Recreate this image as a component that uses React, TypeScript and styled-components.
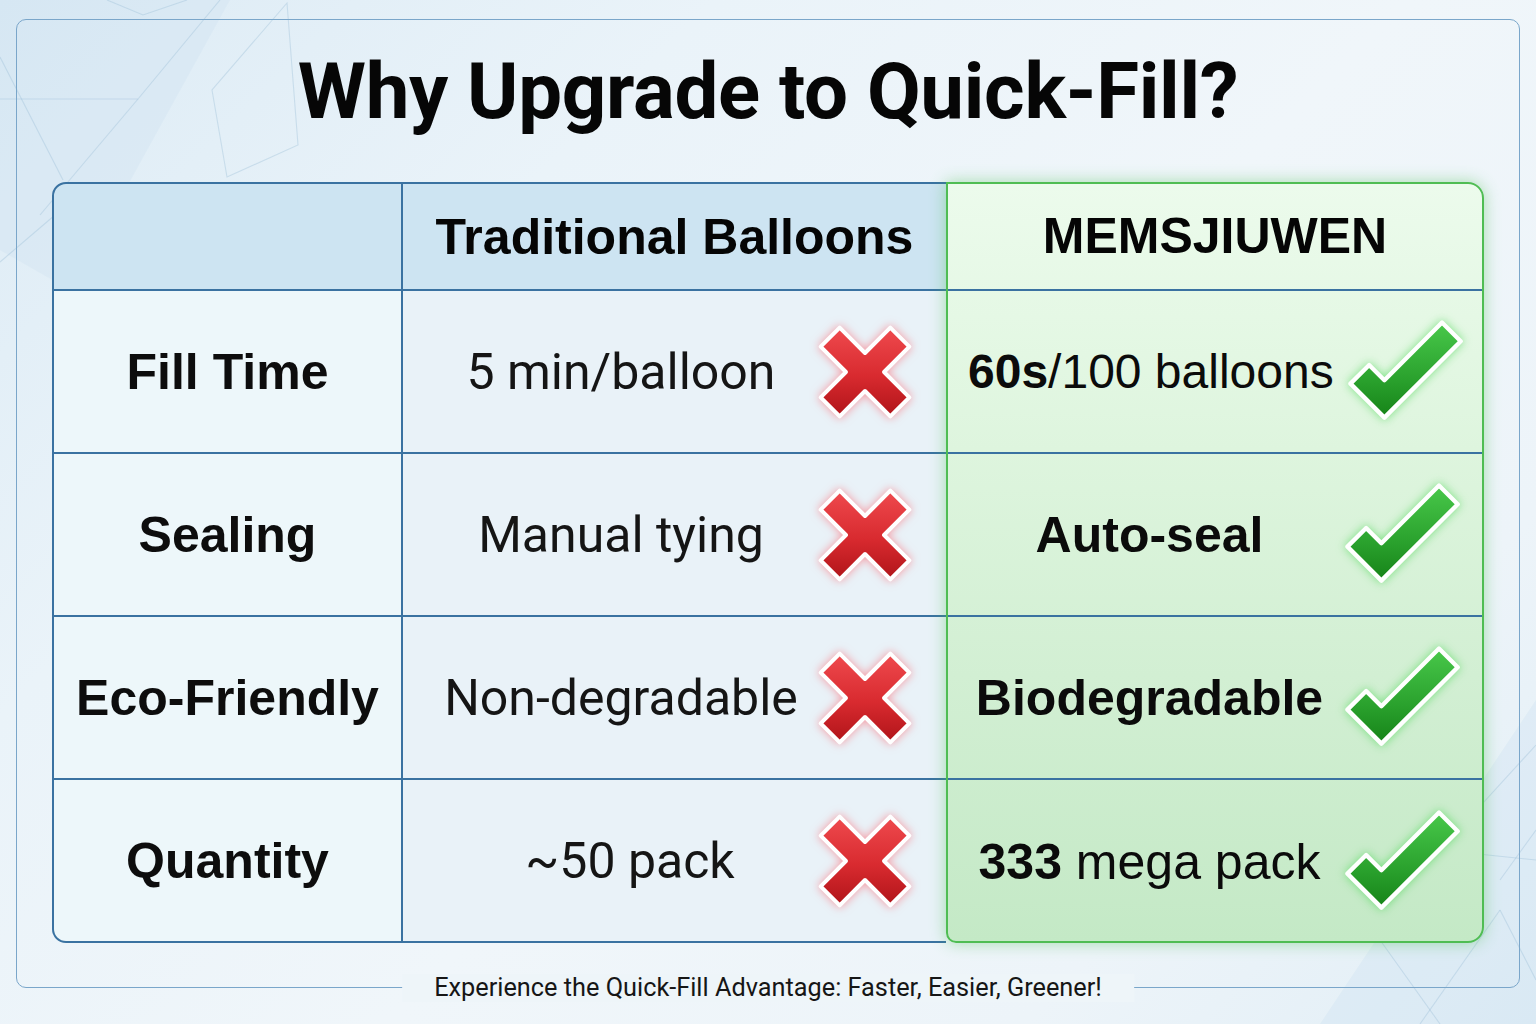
import React from "react";
import styled, { createGlobalStyle } from "styled-components";

const BLUE_LINE = "#3a72a1";
const GREEN_LINE = "#4fbd53";

const GlobalStyle = createGlobalStyle`
  html, body { margin: 0; padding: 0; }
  body {
    width: 1536px;
    height: 1024px;
    overflow: hidden;
    background: linear-gradient(135deg, #dcebf5 0%, #eaf3f9 28%, #f0f6fa 55%, #edf4f9 80%, #e1eef6 100%);
    font-family: "Liberation Sans", Arial, sans-serif;
    color: #0d0d0d;
  }
`;

const Page = styled.div`
  position: relative;
  width: 1536px;
  height: 1024px;
  box-sizing: border-box;
  padding: 19px 16px 36px;
  display: flex;
`;

const Decor = styled.svg`
  position: absolute;
  inset: 0;
  width: 1536px;
  height: 1024px;
  pointer-events: none;
`;

const Frame = styled.main`
  position: relative;
  flex: 1;
  box-sizing: border-box;
  border: 1.5px solid #7aa6ca;
  border-radius: 10px;
  display: flex;
  flex-direction: column;
  align-items: center;
  padding-top: 33px;
`;

const Title = styled.h1`
  margin: 0;
  font-family: Roboto, "Liberation Sans", sans-serif;
  font-weight: 700;
  font-size: 78px;
  line-height: 78px;
  letter-spacing: -0.3px;
  color: #060606;
`;

const Table = styled.section`
  margin-top: 51px;
  display: grid;
  grid-template-columns: 351px 543px 538px;
  grid-template-rows: 109px repeat(4, 163px);
`;

const GreenPanel = styled.div`
  grid-column: 3;
  grid-row: 1 / 6;
  z-index: 1;
  box-sizing: border-box;
  border: 2px solid ${GREEN_LINE};
  border-radius: 0 16px 16px 10px;
  background: linear-gradient(180deg, #ecfbec 0%, #def5de 35%, #d2efd3 65%, #c4e9c6 100%);
  box-shadow: 0 0 16px rgba(76, 190, 82, 0.45);
`;

type CellProps = { $row: number; $last?: boolean };

const Cell = styled.div<CellProps>`
  grid-row: ${(p) => p.$row};
  box-sizing: border-box;
  display: flex;
  align-items: center;
  justify-content: center;
  border-bottom: 2px solid ${BLUE_LINE};
  ${(p) => (p.$row === 1 ? `border-top: 2px solid ${BLUE_LINE};` : "")}
`;

const LabelCell = styled(Cell)`
  grid-column: 1;
  border-left: 2px solid ${BLUE_LINE};
  border-right: 2px solid ${BLUE_LINE};
  background: ${(p) => (p.$row === 1 ? "#cde4f2" : "#edf7fa")};
  ${(p) => (p.$row === 1 ? "border-top-left-radius: 14px;" : "")}
  ${(p) => (p.$last ? "border-bottom-left-radius: 14px;" : "")}
  font-weight: 700;
  font-size: 50px;
`;

const TradCell = styled(Cell)`
  grid-column: 2;
  background: ${(p) => (p.$row === 1 ? "#cde4f2" : "#e9f2f8")};
  justify-content: ${(p) => (p.$row === 1 ? "center" : "flex-start")};
`;

const GreenCell = styled(Cell)`
  grid-column: 3;
  z-index: 2;
  margin: 0 2px;
  border-top: none;
  ${(p) => (p.$last ? "border-bottom: none;" : "")}
  background: transparent;
  justify-content: ${(p) => (p.$row === 1 ? "center" : "flex-start")};
`;

const HeadText = styled.span`
  font-weight: 700;
  font-size: 50px;
  color: #050505;
`;

const TradText = styled.span<{ $shift?: number }>`
  flex: 1;
  padding-left: ${(p) => 30 + (p.$shift ?? 0)}px;
  text-align: center;
  font-family: Roboto, "Liberation Sans", sans-serif;
  font-size: 50px;
  color: #151515;
  white-space: nowrap;
`;

const GreenText = styled.span<{ $size?: number; $bold?: boolean }>`
  flex: 1;
  padding-left: 20px;
  text-align: center;
  font-size: ${(p) => p.$size ?? 50}px;
  font-weight: ${(p) => (p.$bold ? 700 : 400)};
  color: #0b0b0b;
  white-space: nowrap;
  b { font-weight: 700; }
`;

const CrossSvg = styled.svg`
  flex: none;
  width: 112px;
  height: 112px;
  margin-right: 25px;
  filter: drop-shadow(0 0 5px rgba(255, 90, 100, 0.6));
`;

const CheckSvg = styled.svg`
  flex: none;
  width: 144px;
  height: 120px;
  margin-right: 7px;
  filter: drop-shadow(0 0 5px rgba(70, 215, 80, 0.65));
`;

const Caption = styled.p`
  position: absolute;
  left: 50%;
  bottom: -14.5px;
  transform: translateX(-50%);
  margin: 0;
  padding: 0 32px;
  background: #eef5f9;
  font-family: Roboto, "Liberation Sans", sans-serif;
  font-size: 25.3px;
  line-height: 28px;
  white-space: nowrap;
  color: #161616;
`;

let uid = 0;

function Cross() {
  const id = React.useMemo(() => `xg${uid++}`, []);
  return (
    <CrossSvg viewBox="0 0 100 100">
      <defs>
        <linearGradient id={id} x1="0" y1="0" x2="0" y2="1">
          <stop offset="0" stopColor="#ef4a4e" />
          <stop offset="0.55" stopColor="#d82a2f" />
          <stop offset="1" stopColor="#b01419" />
        </linearGradient>
      </defs>
      <polygon
        points="89.6,27.4 67,50 89.6,72.6 72.6,89.6 50,67 27.4,89.6 10.4,72.6 33,50 10.4,27.4 27.4,10.4 50,33 72.6,10.4"
        fill={`url(#${id})`}
        stroke="#ffffff"
        strokeWidth="3.6"
        strokeLinejoin="round"
      />
    </CrossSvg>
  );
}

function Check() {
  const id = React.useMemo(() => `cg${uid++}`, []);
  return (
    <CheckSvg viewBox="0 0 120 100">
      <defs>
        <linearGradient id={id} x1="0" y1="0" x2="0" y2="1">
          <stop offset="0" stopColor="#48c84a" />
          <stop offset="0.6" stopColor="#2aa12d" />
          <stop offset="1" stopColor="#168318" />
        </linearGradient>
      </defs>
      <polygon
        points="42,88 13.7,59.7 29.3,44.1 42,56.9 90,8.8 105.6,24.4"
        fill={`url(#${id})`}
        stroke="#ffffff"
        strokeWidth="3.6"
        strokeLinejoin="round"
      />
    </CheckSvg>
  );
}

type Row = {
  label: string;
  trad: string;
  shift?: number;
  green: React.ReactNode;
  size?: number;
  bold?: boolean;
};

const rows: Row[] = [
  { label: "Fill Time", trad: "5 min/balloon", green: <><b>60s</b>/100 balloons</>, size: 48 },
  { label: "Sealing", trad: "Manual tying", green: "Auto-seal", bold: true },
  { label: "Eco-Friendly", trad: "Non-degradable", green: "Biodegradable", bold: true },
  { label: "Quantity", trad: "~50 pack", shift: 18, green: <><b>333</b> mega pack</> },
];

function Background() {
  return (
    <Decor viewBox="0 0 1536 1024">
      <polygon points="0,0 230,0 70,290 0,250" fill="rgba(195,220,238,0.22)" />
      <polygon points="1536,700 1536,1024 1320,1024" fill="rgba(195,220,238,0.25)" />
      <g fill="none" stroke="rgba(150,185,212,0.35)" strokeWidth="1.1">
        <polyline points="107,0 143,15 187,0" />
        <polyline points="220,0 138,99 0,99" />
        <line x1="0" y1="57" x2="63" y2="180" />
        <line x1="138" y1="99" x2="40" y2="215" />
        <polygon points="287,3 212,90 227,177 298,145" />
        <line x1="0" y1="262" x2="55" y2="215" />
        <line x1="1536" y1="745" x2="1440" y2="850" />
        <line x1="1440" y1="850" x2="1536" y2="860" />
        <line x1="1500" y1="880" x2="1536" y2="830" />
        <line x1="1420" y1="1024" x2="1500" y2="910" />
        <line x1="1500" y1="910" x2="1536" y2="980" />
        <line x1="1380" y1="940" x2="1440" y2="1024" />
      </g>
    </Decor>
  );
}

export default function App() {
  return (
    <>
      <GlobalStyle />
      <Page>
        <Background />
        <Frame>
          <Title>Why Upgrade to Quick-Fill?</Title>
          <Table>
            <GreenPanel />
            <LabelCell $row={1} />
            <TradCell $row={1}>
              <HeadText>Traditional Balloons</HeadText>
            </TradCell>
            <GreenCell $row={1}>
              <HeadText>MEMSJIUWEN</HeadText>
            </GreenCell>
            {rows.map((r, i) => {
              const row = i + 2;
              const last = i === rows.length - 1;
              return (
                <React.Fragment key={r.label}>
                  <LabelCell $row={row} $last={last}>
                    {r.label}
                  </LabelCell>
                  <TradCell $row={row} $last={last}>
                    <TradText $shift={r.shift}>{r.trad}</TradText>
                    <Cross />
                  </TradCell>
                  <GreenCell $row={row} $last={last}>
                    <GreenText $size={r.size} $bold={r.bold}>
                      {r.green}
                    </GreenText>
                    <Check />
                  </GreenCell>
                </React.Fragment>
              );
            })}
          </Table>
          <Caption>Experience the Quick-Fill Advantage: Faster, Easier, Greener!</Caption>
        </Frame>
      </Page>
    </>
  );
}
